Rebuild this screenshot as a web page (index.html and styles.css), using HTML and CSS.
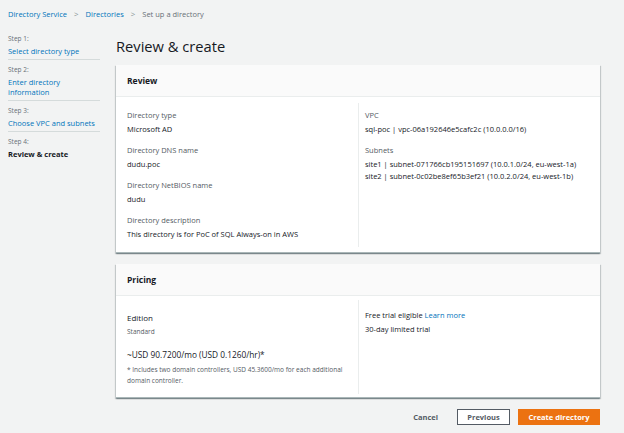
FILE: index.html
```html
<!DOCTYPE html>
<html lang="en">
<head>
<meta charset="utf-8">
<title>Review &amp; create</title>
<link rel="stylesheet" href="styles.css">
</head>
<body>
<div class="page">
  <nav class="crumbs">
    <a class="crumb-link">Directory Service</a>
    <span class="sep">&gt;</span>
    <a class="crumb-link">Directories</a>
    <span class="sep">&gt;</span>
    <span class="crumb-current">Set up a directory</span>
  </nav>
  <div class="layout">
    <aside class="steps">
      <div class="step">
        <div class="step-num">Step 1:</div>
        <a class="step-link">Select directory type</a>
      </div>
      <div class="step">
        <div class="step-num">Step 2:</div>
        <a class="step-link">Enter directory information</a>
      </div>
      <div class="step">
        <div class="step-num">Step 3:</div>
        <a class="step-link">Choose VPC and subnets</a>
      </div>
      <div class="step step-last">
        <div class="step-num">Step 4:</div>
        <div class="step-current">Review &amp; create</div>
      </div>
    </aside>
    <main class="content">
      <h1 class="title">Review &amp; create</h1>
      <section class="card">
        <header class="card-head">Review</header>
        <div class="card-body">
          <div class="col col-left">
            <div class="kv">
              <div class="label">Directory type</div>
              <div class="value">Microsoft AD</div>
            </div>
            <div class="kv">
              <div class="label">Directory DNS name</div>
              <div class="value">dudu.poc</div>
            </div>
            <div class="kv">
              <div class="label">Directory NetBIOS name</div>
              <div class="value">dudu</div>
            </div>
            <div class="kv">
              <div class="label">Directory description</div>
              <div class="value">This directory is for PoC of SQL Always-on in AWS</div>
            </div>
          </div>
          <div class="col col-right">
            <div class="kv">
              <div class="label">VPC</div>
              <div class="value">sql-poc | vpc-06a192646e5cafc2c (10.0.0.0/16)</div>
            </div>
            <div class="kv">
              <div class="label">Subnets</div>
              <div class="value">site1 | subnet-071766cb195151697 (10.0.1.0/24, eu-west-1a)</div>
              <div class="value value-tight">site2 | subnet-0c02be8ef65b3ef21 (10.0.2.0/24, eu-west-1b)</div>
            </div>
          </div>
        </div>
      </section>
      <section class="card card-pricing">
        <header class="card-head">Pricing</header>
        <div class="card-body">
          <div class="col col-left pricing-left">
            <div class="edition">Edition</div>
            <div class="small">Standard</div>
            <div class="price">~USD 90.7200/mo (USD 0.1260/hr)*</div>
            <div class="small note">* Includes two domain controllers, USD 45.3600/mo for each additional domain controller.</div>
          </div>
          <div class="col col-right pricing-right">
            <div class="value">Free trial eligible <a class="link">Learn more</a></div>
            <div class="value trial">30-day limited trial</div>
          </div>
        </div>
      </section>
      <div class="actions">
        <button class="btn btn-text">Cancel</button>
        <button class="btn btn-normal">Previous</button>
        <button class="btn btn-primary">Create directory</button>
      </div>
    </main>
  </div>
</div>
</body>
</html>
```

FILE: styles.css
```css
html, body {
  margin: 0;
  padding: 0;
  background: #f2f3f3;
}
body {
  font-family: "Open Sans", "Noto Sans", sans-serif;
  font-size: 7.5px;
  color: #16191f;
  width: 624px;
  height: 433px;
  overflow: hidden;
}
.page {
  padding: 8px 24px 0 8px;
}
.crumbs {
  display: flex;
  align-items: center;
  line-height: 12px;
  height: 12px;
  font-size: 7.5px;
  margin-bottom: 4px;
}
.crumb-link {
  color: #0073bb;
}
.sep {
  color: #879596;
  margin: 0 7px;
  font-size: 8px;
}
.crumb-current {
  color: #687078;
}
.layout {
  display: grid;
  grid-template-columns: 92px 1fr;
  column-gap: 16px;
}
.steps {
  display: flex;
  flex-direction: column;
  padding-top: 5px;
}
.step {
  padding: 5px 0 3px;
  border-bottom: 1px solid #d5dbdb;
  line-height: 10px;
}
.step-last {
  border-bottom: none;
}
.step-num {
  color: #687078;
  font-size: 6.5px;
  line-height: 10px;
}
.step-link {
  display: block;
  color: #0073bb;
  font-size: 7.5px;
  line-height: 10px;
  margin-top: 2px;
}
.step-current {
  font-weight: 700;
  font-size: 7.5px;
  line-height: 10px;
  margin-top: 2px;
}
.content {
  padding-top: 12px;
}
.title {
  margin: 0 0 9px;
  font-weight: 400;
  font-size: 14.7px;
  line-height: 20px;
  color: #16191f;
}
.card {
  background: #fff;
  box-shadow: 0 1px 1px 0 rgba(0, 28, 36, 0.3), 1px 1px 1px 0 rgba(0, 28, 36, 0.15), -1px 1px 1px 0 rgba(0, 28, 36, 0.15);
  border-bottom: 1px solid #aab7b8;
}
.card-head {
  height: 32px;
  box-sizing: border-box;
  padding: 0 11px;
  display: flex;
  align-items: center;
  background: #fafafa;
  border-bottom: 1px solid #eaeded;
  font-weight: 700;
  font-size: 8.5px;
}
.card-body {
  display: grid;
  grid-template-columns: 242px 1fr;
  padding: 6px 0 5px;
}
.col {
  padding: 6px 11px 7px;
  display: flex;
  flex-direction: column;
  gap: 9px;
}
.col-right {
  border-left: 1px solid #eaeded;
  padding-left: 6px;
}
.kv {
  display: flex;
  flex-direction: column;
}
.label {
  color: #545b64;
  line-height: 12px;
}
.value {
  line-height: 12px;
  margin-top: 2px;
}
.value-tight {
  margin-top: 0;
}
.card-pricing {
  margin-top: 11px;
}
.card-pricing .card-body {
  padding: 4px 0 3px;
}
.pricing-left {
  padding: 12px 11px 8px;
  gap: 0;
}
.pricing-right {
  padding: 9px 11px 8px 6px;
  gap: 0;
}
.pricing-right .value:first-child {
  margin-top: 0;
}
.edition {
  line-height: 12px;
  font-size: 8px;
}
.small {
  font-size: 6.5px;
  color: #545b64;
  line-height: 11px;
  margin-top: 1.5px;
}
.price {
  margin-top: 12.5px;
  line-height: 12px;
  font-size: 8.3px;
}
.note {
  margin-top: 2.5px;
}
.trial {
  margin-top: 2px;
}
.link {
  color: #0073bb;
}
.actions {
  display: flex;
  justify-content: flex-end;
  align-items: center;
  margin-top: 11px;
  gap: 8px;
}
.btn {
  font-family: inherit;
  font-weight: 700;
  font-size: 7.5px;
  height: 16px;
  line-height: 14px;
  padding: 0 4px;
  border-radius: 0;
  white-space: nowrap;
  cursor: pointer;
}
.btn-text {
  background: none;
  border: none;
  color: #545b64;
  padding: 0;
  margin-right: 11px;
}
.btn-normal {
  background: #fff;
  border: 1px solid #545b64;
  color: #545b64;
  width: 53px;
}
.btn-primary {
  background: #ec7211;
  border: 1px solid #ec7211;
  color: #fff;
  width: 82px;
}
```
